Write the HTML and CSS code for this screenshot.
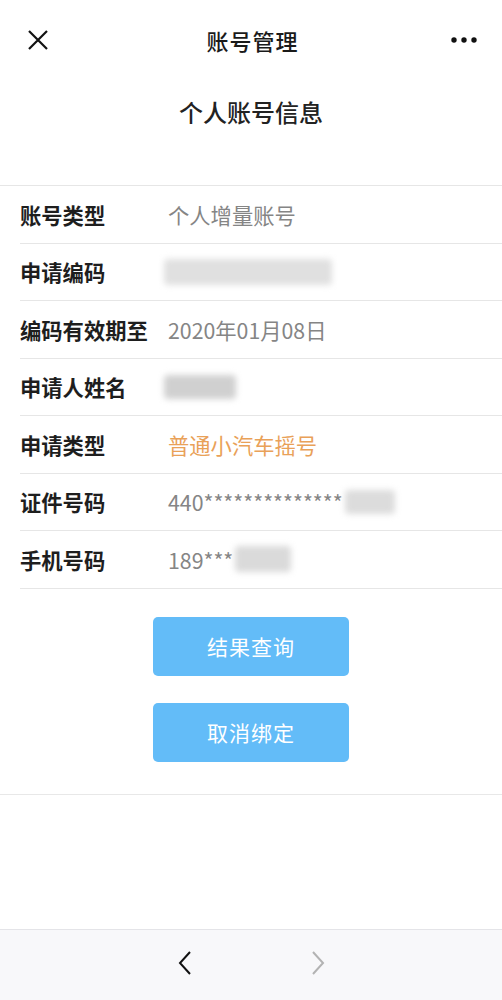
FILE: index.html
```html
<!DOCTYPE html>
<html lang="zh-CN">
<head>
<meta charset="utf-8">
<title>账号管理</title>
<link rel="stylesheet" href="styles.css">
</head>
<body>
<div class="page">
  <header class="navbar">
    <span class="nav-btn close">
      <svg width="22" height="22" viewBox="0 0 22 22"><path d="M2 2L20 20M20 2L2 20" stroke="#111" stroke-width="2.2" fill="none"/></svg>
    </span>
    <h1 class="nav-title">账号管理</h1>
    <span class="nav-btn more">
      <svg width="28" height="8" viewBox="0 0 28 8"><circle cx="4" cy="4" r="2.7" fill="#111"/><circle cx="14" cy="4" r="2.7" fill="#111"/><circle cx="24" cy="4" r="2.7" fill="#111"/></svg>
    </span>
  </header>

  <h2 class="section-title">个人账号信息</h2>

  <div class="info-list">
    <div class="row"><span class="label">账号类型</span><span class="value">个人增量账号</span></div>
    <div class="row"><span class="label">申请编码</span><span class="value"><span class="mask mask-long"></span></span></div>
    <div class="row"><span class="label">编码有效期至</span><span class="value">2020年01月08日</span></div>
    <div class="row"><span class="label">申请人姓名</span><span class="value"><span class="mask mask-name"></span></span></div>
    <div class="row"><span class="label">申请类型</span><span class="value orange">普通小汽车摇号</span></div>
    <div class="row"><span class="label">证件号码</span><span class="value">440**************<span class="mask mask-tail"></span></span></div>
    <div class="row"><span class="label">手机号码</span><span class="value">189***<span class="mask mask-phone"></span></span></div>
  </div>

  <div class="actions">
    <button class="btn">结果查询</button>
    <button class="btn">取消绑定</button>
  </div>

  <div class="spacer"></div>

  <footer class="toolbar">
    <span class="tool">
      <svg width="16" height="26" viewBox="0 0 16 26"><path d="M13 2L3 13L13 24" stroke="#111" stroke-width="2" fill="none"/></svg>
    </span>
    <span class="tool">
      <svg width="16" height="26" viewBox="0 0 16 26"><path d="M3 2L13 13L3 24" stroke="#b3b3b3" stroke-width="2" fill="none"/></svg>
    </span>
  </footer>
</div>
</body>
</html>
```

FILE: styles.css
```css
html, body {
  margin: 0;
  padding: 0;
  background: #fff;
}
body {
  font-family: "Noto Sans CJK SC", "Noto Sans", sans-serif;
  color: #1a1a1a;
}
.page {
  width: 502px;
  height: 1000px;
  display: flex;
  flex-direction: column;
}
.navbar {
  height: 80px;
  display: flex;
  align-items: center;
  justify-content: space-between;
  padding: 0 24px 0 27px;
  box-sizing: border-box;
}
.nav-btn {
  display: flex;
  align-items: center;
  width: 28px;
}
.nav-btn.more { justify-content: flex-end; }
.nav-title {
  margin: 0;
  font-size: 22px;
  font-weight: 500;
  letter-spacing: 1px;
  color: #1a1a1a;
}
.section-title {
  margin: 0;
  height: 106px;
  padding-top: 14px;
  box-sizing: border-box;
  text-align: center;
  font-size: 24px;
  font-weight: 500;
  color: #222;
  border-bottom: 1px solid #e6e6e6;
}
.info-list {
  display: flex;
  flex-direction: column;
}
.row {
  height: 57.5px;
  box-sizing: border-box;
  margin-left: 20px;
  border-bottom: 1px solid #e6e6e6;
  display: flex;
  align-items: center;
  font-size: 21.3px;
}
.label {
  width: 148px;
  flex: none;
  font-weight: 700;
  color: #1e1e1e;
}
.value {
  color: #858585;
  display: flex;
  align-items: center;
}
.value.orange { color: #e9a158; }
.mask {
  display: inline-block;
  background: #d4d4d4;
  filter: blur(3px);
  border-radius: 4px;
}
.mask-long { width: 168px; height: 26px; margin-left: -4px; background: #e0e0e0; }
.mask-name { width: 72px; height: 24px; margin-left: -4px; background: #d0d0d0; }
.mask-tail { width: 50px; height: 24px; margin-left: 2px; background: #dcdcdc; }
.mask-phone { width: 56px; height: 26px; margin-left: 2px; background: #dadada; }
.actions {
  display: flex;
  flex-direction: column;
  align-items: center;
  gap: 27px;
  padding: 28px 0 32px;
  border-bottom: 1px solid #e8e8e8;
}
.btn {
  width: 196px;
  height: 59px;
  border: none;
  border-radius: 5px;
  background: #63bcf8;
  color: #fff;
  font-family: "Noto Sans CJK SC", "Noto Sans", sans-serif;
  font-size: 21px;
  letter-spacing: 1px;
  padding: 0;
}
.spacer { flex: 1; }
.toolbar {
  height: 71px;
  box-sizing: border-box;
  border-top: 1px solid #e4e4e8;
  background: #f8f8fa;
  display: flex;
  align-items: center;
  justify-content: center;
  gap: 117px;
  padding-bottom: 4px;
}
.tool { display: flex; }
```
